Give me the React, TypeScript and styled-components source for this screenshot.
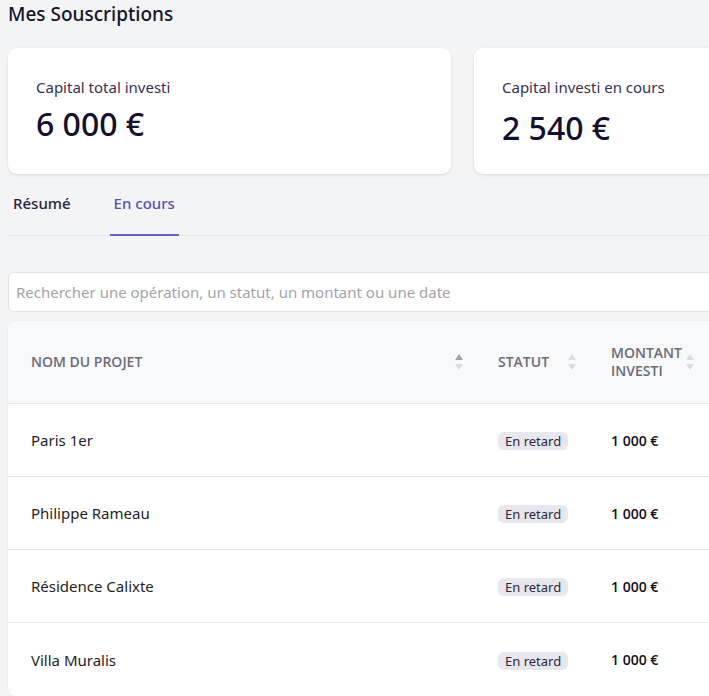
import React from 'react';
import styled, { createGlobalStyle } from 'styled-components';

interface Row {
  name: string;
  status: string;
  amount: string;
}

const rows: Row[] = [
  { name: 'Paris 1er', status: 'En retard', amount: '1 000 €' },
  { name: 'Philippe Rameau', status: 'En retard', amount: '1 000 €' },
  { name: 'Résidence Calixte', status: 'En retard', amount: '1 000 €' },
  { name: 'Villa Muralis', status: 'En retard', amount: '1 000 €' },
];

const SortIcon = ({ active = false }: { active?: boolean }) => (
  <svg width="10" height="18" viewBox="0 0 10 18">
    <path d="M5 1 L9 7 H1 Z" fill={active ? '#a3a3ad' : '#dcdde2'} />
    <path d="M5 17 L9 11 H1 Z" fill="#dcdde2" />
  </svg>
);

const App = () => (
  <>
    <GlobalStyle />
    <Page>
      <Title>Mes Souscriptions</Title>
      <Cards>
        <Card>
          <CardLabel>Capital total investi</CardLabel>
          <CardValue offset="4px">6 000 €</CardValue>
        </Card>
        <Card>
          <CardLabel>Capital investi en cours</CardLabel>
          <CardValue offset="8px">2 540 €</CardValue>
        </Card>
      </Cards>
      <Tabs>
        <Tab>Résumé</Tab>
        <Tab active>En cours</Tab>
      </Tabs>
      <Search placeholder="Rechercher une opération, un statut, un montant ou une date" />
      <Table>
        <HeadRow>
          <HeadCell>
            <span>Nom du projet</span>
            <SortIcon active />
          </HeadCell>
          <HeadCell>
            <span>Statut</span>
            <SortIcon />
          </HeadCell>
          <HeadCell>
            <span>
              Montant
              <br />
              investi
            </span>
            <SortIcon />
          </HeadCell>
          <HeadCell />
        </HeadRow>
        {rows.map((row) => (
          <BodyRow key={row.name}>
            <Cell>{row.name}</Cell>
            <Cell>
              <Badge>{row.status}</Badge>
            </Cell>
            <Amount>{row.amount}</Amount>
            <Cell />
          </BodyRow>
        ))}
      </Table>
    </Page>
  </>
);

const GlobalStyle = createGlobalStyle`
  html, body {
    margin: 0;
    padding: 0;
    background: #f3f4f6;
    overflow: hidden;
  }
  body {
    font-family: 'Noto Sans', 'Open Sans', sans-serif;
  }
`;

const Page = styled.div`
  width: 909px;
  padding: 0 0 0 8px;
  display: flex;
  flex-direction: column;
`;

const Title = styled.h1`
  margin: 0;
  padding-top: 1px;
  height: 47px;
  font-size: 19px;
  font-weight: 500;
  color: #16122b;
  line-height: 26px;
`;

const Cards = styled.div`
  display: grid;
  grid-template-columns: 443px 443px;
  gap: 23px;
`;

const Card = styled.div`
  background: #ffffff;
  border-radius: 9px;
  box-shadow: 0 1px 3px rgba(20, 20, 40, 0.12);
  height: 126px;
  padding: 28px 0 0 28px;
  box-sizing: border-box;
`;

const CardLabel = styled.div`
  font-size: 15px;
  color: #392f52;
  line-height: 22px;
`;

const CardValue = styled.div<{ offset?: string }>`
  margin-top: ${({ offset }) => offset || '0'};
  font-size: 32px;
  font-weight: 500;
  color: #140f2c;
  line-height: 44px;
`;

const Tabs = styled.div`
  margin-top: 10px;
  display: flex;
  gap: 35px;
  border-bottom: 1px solid #e4e5e9;
  height: 51px;
  padding-left: 1px;
`;

const Tab = styled.div<{ active?: boolean }>`
  padding: 8px 4px 0;
  font-size: 15px;
  font-weight: 500;
  line-height: 22px;
  color: ${({ active }) => (active ? '#5a4db3' : '#2a2440')};
  box-sizing: border-box;
  border-bottom: 2px solid ${({ active }) => (active ? '#6a62c1' : 'transparent')};
  margin-bottom: -1px;
`;

const Search = styled.input`
  margin-top: 36px;
  height: 40px;
  box-sizing: border-box;
  border: 1px solid #e3e4e8;
  border-radius: 6px;
  background: #ffffff;
  padding: 0 7px;
  font-family: 'Noto Sans', sans-serif;
  font-size: 15px;
  outline: none;
  &::placeholder {
    color: #a3a3ab;
  }
`;

const Table = styled.div`
  margin-top: 9px;
  background: #ffffff;
  border-radius: 8px;
  overflow: hidden;
  box-shadow: 0 0 0 1px #eceef1;
`;

const grid = `
  display: grid;
  grid-template-columns: 467px 113px 118px 1fr;
  align-items: center;
  box-sizing: border-box;
`;

const HeadRow = styled.div`
  ${grid}
  height: 83px;
  background: #f8f9fa;
  border-bottom: 1px solid #e5e7eb;
`;

const HeadCell = styled.div`
  display: flex;
  align-items: center;
  justify-content: space-between;
  padding: 0 11px 0 23px;
  font-family: 'Open Sans', sans-serif;
  font-size: 14px;
  font-weight: 600;
  line-height: 18px;
  text-transform: uppercase;
  color: #6c6b78;
`;

const BodyRow = styled.div`
  ${grid}
  height: 73px;
  border-bottom: 1px solid #e7e8ec;
  &:last-child {
    border-bottom: none;
  }
`;

const Cell = styled.div`
  padding-left: 23px;
  font-size: 15px;
  color: #1f1d26;
`;

const Amount = styled(Cell)`
  font-family: 'Open Sans', sans-serif;
  font-size: 14px;
  font-weight: 600;
  color: #121018;
`;

const Badge = styled.span`
  display: inline-block;
  padding: 0 7px;
  height: 18px;
  line-height: 18px;
  border-radius: 6px;
  background: #e8e7ef;
  font-size: 13px;
  color: #2b2838;
`;

export default App;
